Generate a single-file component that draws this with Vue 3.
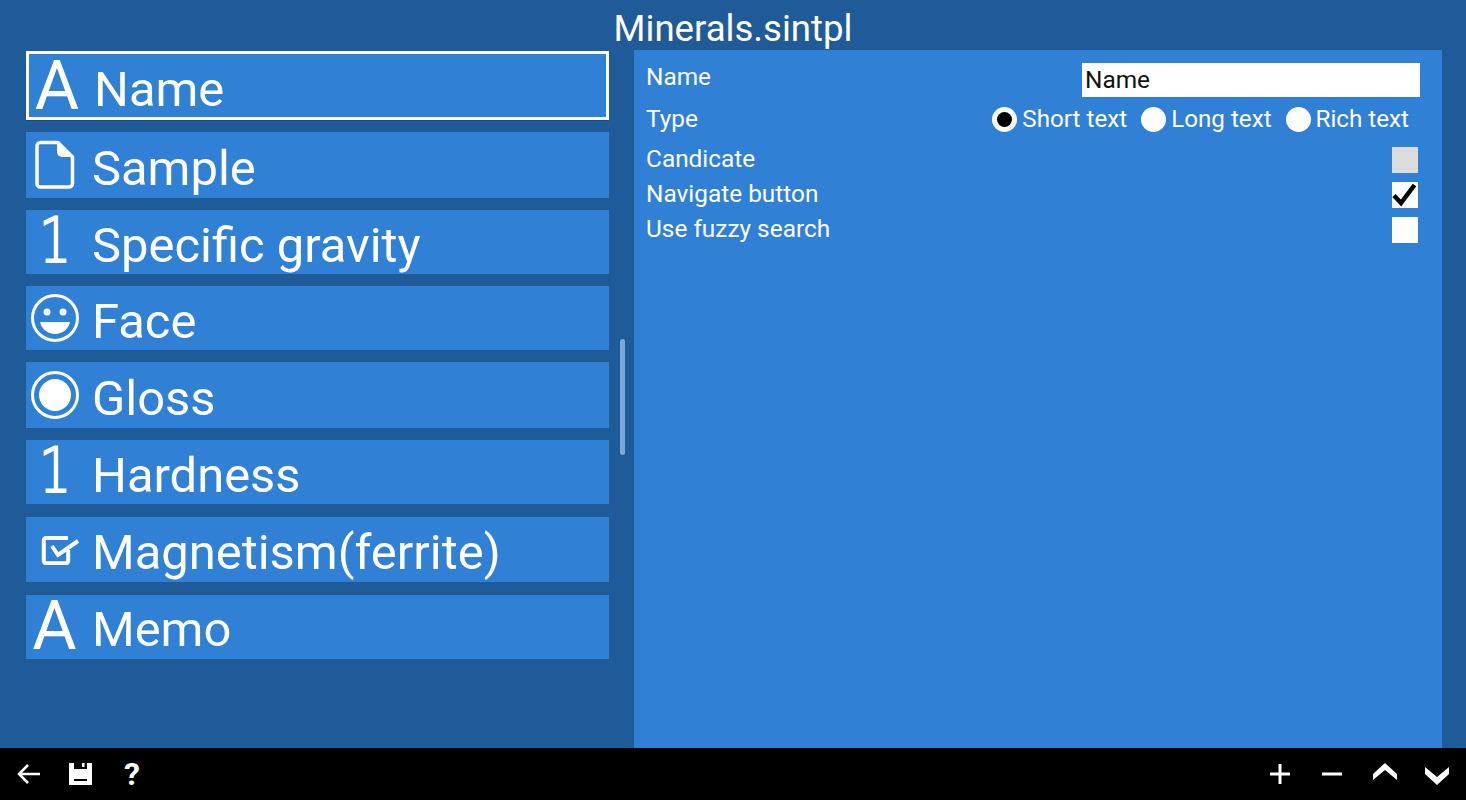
<script setup>
const rows = [
  { name: 'Name', icon: 'A', selected: true, h: 69 },
  { name: 'Sample', icon: 'file', h: 66 },
  { name: 'Specific gravity', icon: '1', h: 64 },
  { name: 'Face', icon: 'face', h: 64 },
  { name: 'Gloss', icon: 'radio', h: 66 },
  { name: 'Hardness', icon: '1', h: 64 },
  { name: 'Magnetism(ferrite)', icon: 'check', h: 65 },
  { name: 'Memo', icon: 'A', h: 64 },
]
</script>

<template>
  <div class="app">
    <header class="title">Minerals.sintpl</header>
    <main class="main">
      <ul class="list">
        <li v-for="r in rows" :key="r.name" class="row" :class="{ selected: r.selected }" :style="{ height: r.h + 'px' }">
          <span class="ico">
            <span v-if="r.icon === 'A'" class="glyph-a">A</span>
            <span v-else-if="r.icon === '1'" class="glyph-1">1</span>
            <svg v-else-if="r.icon === 'file'" width="40" height="50" viewBox="0 0 40 50">
              <path d="M5.500 2.500H23L37.500 17V43.500a3.500 3.500 0 0 1-3.500 3.500H5.500A3.500 3.500 0 0 1 2 43.500V6A3.500 3.500 0 0 1 5.500 2.500Z" fill="none" stroke="#fff" stroke-width="3.500" stroke-linejoin="round"/>
              <path d="M22 2.500V12a5 5 0 0 0 5 5H37.500Z" fill="#fff"/>
            </svg>
            <svg v-else-if="r.icon === 'face'" width="50" height="50" viewBox="0 0 50 50">
              <circle cx="25" cy="25" r="22.500" fill="none" stroke="#fff" stroke-width="3"/>
              <circle cx="17" cy="19" r="3.500" fill="#fff"/>
              <circle cx="33" cy="19" r="3.500" fill="#fff"/>
              <path d="M10 29H40C38.500 36 32.500 41 25 41S11.500 36 10 29Z" fill="#fff"/>
            </svg>
            <svg v-else-if="r.icon === 'radio'" width="50" height="50" viewBox="0 0 50 50">
              <circle cx="25" cy="25" r="22.500" fill="none" stroke="#fff" stroke-width="3"/>
              <circle cx="25" cy="25" r="16" fill="#fff"/>
            </svg>
            <svg v-else class="check-ico" width="40" height="30" viewBox="0 0 40 30">
              <path d="M27 3H5a2.200 2.200 0 0 0-2.200 2.200V26a2.200 2.200 0 0 0 2.200 2.200H25a2.200 2.200 0 0 0 2.200-2.200V15" fill="none" stroke="#fff" stroke-width="4"/>
              <path d="M11 11L17 20L37 6" fill="none" stroke="#fff" stroke-width="4"/>
            </svg>
          </span>
          <span class="row-text">{{ r.name }}</span>
        </li>
      </ul>
      <div class="scroll-track"><div class="thumb"></div></div>
      <section class="panel">
        <div class="field name-field">
          <span>Name</span>
          <div class="input">Name</div>
        </div>
        <div class="field type-field">
          <span>Type</span>
          <div class="radios">
            <span class="radio on"></span><span class="radio-label">Short text</span>
            <span class="radio"></span><span class="radio-label">Long text</span>
            <span class="radio"></span><span class="radio-label">Rich text</span>
          </div>
        </div>
        <div class="field check-field">
          <span class="lbl">Candicate</span>
          <span class="box disabled"></span>
        </div>
        <div class="field check-field">
          <span class="lbl">Navigate button</span>
          <span class="box">
            <svg width="26" height="26" viewBox="0 0 26 26"><path d="M2 13.500L9 21L22.500 3" fill="none" stroke="#000" stroke-width="4.500"/></svg>
          </span>
        </div>
        <div class="field check-field">
          <span class="lbl">Use fuzzy search</span>
          <span class="box"></span>
        </div>
      </section>
    </main>
    <footer class="bar">
      <div class="bar-group">
        <svg class="b1" width="26" height="24" viewBox="0 0 26 24"><path d="M24 12H3M12 3L3 12L12 21" fill="none" stroke="#fff" stroke-width="2.500"/></svg>
        <svg class="b2" width="24" height="24" viewBox="0 0 24 24"><path fill-rule="evenodd" d="M0 1H5V7H18V1H23V23H0ZM5 17V19H18V17Z" fill="#fff"/><path d="M13 1h2.500v4H13z" fill="#fff"/></svg>
        <span class="q">?</span>
      </div>
      <div class="bar-group">
        <svg class="b4" width="22" height="22" viewBox="0 0 22 22"><path d="M11 1V21M1 11H21" stroke="#fff" stroke-width="3"/></svg>
        <svg class="b5" width="22" height="22" viewBox="0 0 22 22"><path d="M1 11H21" stroke="#fff" stroke-width="3"/></svg>
        <svg class="b6" width="24" height="18" viewBox="0 0 24 18"><path d="M12 0L24 11V17L12 7L0 17V11Z" fill="#fff"/></svg>
        <svg class="b7" width="24" height="18" viewBox="0 0 24 18"><path d="M12 18L24 7V0L12 10L0 0V7Z" fill="#fff"/></svg>
      </div>
    </footer>
  </div>
</template>

<style scoped>
.app {
  width: 1466px;
  height: 800px;
  display: flex;
  flex-direction: column;
  background: #1f5b99;
  color: #fff;
  font-family: Roboto, "Liberation Sans", sans-serif;
  overflow: hidden;
}
.title {
  height: 50px;
  flex: none;
  box-sizing: border-box;
  padding-top: 8px;
  text-align: center;
  font-size: 36.600px;
  line-height: 42px;
}
.main {
  flex: 1;
  min-height: 0;
  display: flex;
  padding: 0 24px 0 26px;
}
.list {
  list-style: none;
  margin: 0;
  padding: 1px 0 0;
  width: 583px;
  flex: none;
  display: flex;
  flex-direction: column;
  gap: 12px;
}
.row {
  flex: none;
  display: flex;
  align-items: center;
  background: #3080d5;
  box-sizing: border-box;
  font-size: 48.900px;
}
.row:nth-child(n+7) { margin-top: 1px; }
.row.selected {
  border: 3px solid #fff;
  box-shadow: 0 1px 0 #134c94;
}
.ico {
  width: 66px;
  box-sizing: border-box;
  padding-right: 9px;
  flex: none;
  display: flex;
  justify-content: center;
  align-items: center;
  height: 100%;
}
.selected .ico { width: 65px; padding-right: 9px; }
.row-text {
  line-height: 56px;
  margin-top: 8px;
  white-space: nowrap;
}
.row:nth-child(n+7) .row-text { margin-top: 6px; }
.glyph-a {
  font-size: 68px;
  line-height: 64px;
}
.row:nth-child(8) .glyph-a { margin-top: -2px; }
.glyph-1 {
  font-family: "DejaVu Sans", sans-serif;
  font-weight: 200;
  font-size: 62px;
  line-height: 64px;
  margin-top: -3px;
  -webkit-text-stroke: 2.200px #fff;
  transform: translateX(0.500px) scaleX(0.82);
}
.check-ico { margin-left: 12px; }
.scroll-track {
  width: 25px;
  flex: none;
  position: relative;
}
.thumb {
  position: absolute;
  left: 11px;
  top: 289px;
  width: 5px;
  height: 116px;
  border-radius: 3px;
  background: #7ba8d6;
}
.panel {
  flex: 1;
  background: #3080d5;
  box-sizing: border-box;
  padding: 13px 22px 0 12px;
  font-size: 24.400px;
  display: flex;
  flex-direction: column;
}
.field {
  display: flex;
  justify-content: space-between;
}
.name-field { height: 36px; align-items: flex-start; line-height: 28px; }
.input {
  width: 338px;
  height: 34px;
  box-sizing: border-box;
  background: #fff;
  color: #111;
  padding-left: 3px;
  line-height: 34px;
}
.type-field { height: 40px; margin-bottom: 3px; align-items: center; line-height: 28px; }
.radios { display: flex; align-items: center; padding-right: 11px; }
.radio {
  width: 25px;
  height: 25px;
  border-radius: 50%;
  background: #fff;
  display: flex;
  align-items: center;
  justify-content: center;
  margin-right: 5px;
}
.radio.on::after {
  content: "";
  width: 15px;
  height: 15px;
  border-radius: 50%;
  background: #000;
}
.radio-label { margin-right: 14px; font-size: 24.200px; }
.radio-label:last-child { margin-right: 0; }
.check-field { height: 35px; align-items: center; padding-right: 2px; line-height: 28px; }
.lbl { margin-top: -2px; }
.box {
  width: 26px;
  height: 26px;
  background: #fff;
  display: block;
}
.box svg { display: block; }
.box.disabled { background: #dcdcdc; }
.bar {
  height: 52px;
  flex: none;
  background: #000;
  display: flex;
  justify-content: space-between;
  align-items: center;
  box-sizing: border-box;
  padding: 0 17px 0 16px;
}
.bar-group { display: flex; align-items: center; }
.b2 { margin-left: 27px; }
.q {
  margin-left: 31px;
  font-size: 32px;
  font-weight: 700;
  line-height: 32px;
}
.b5 { margin-left: 30px; }
.b6 { margin-left: 30px; margin-top: -4px; }
.b7 { margin-left: 28px; margin-top: 4px; }
</style>

<style>
html, body { margin: 0; background: #1f5b99; }
</style>
